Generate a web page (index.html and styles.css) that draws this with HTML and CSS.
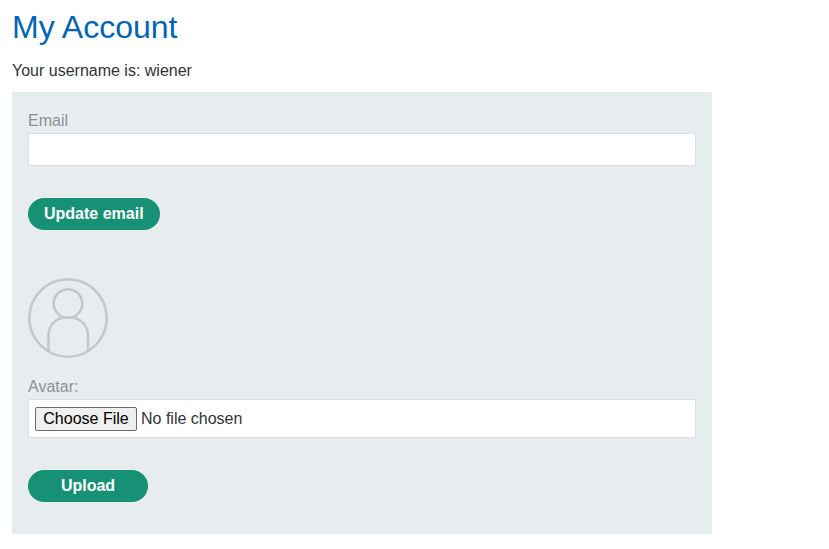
FILE: index.html
```html
<!DOCTYPE html>
<html lang="en">
<head>
<meta charset="utf-8">
<title>My Account</title>
<link rel="stylesheet" href="styles.css">
</head>
<body>
<main class="account">
  <h1 class="title">My Account</h1>
  <p class="username">Your username is: wiener</p>
  <div class="panel">
    <form class="form">
      <label class="label" for="email">Email</label>
      <input class="field" id="email" type="email" name="email">
      <button class="button" type="submit">Update email</button>
    </form>
    <form class="form">
      <svg class="avatar" viewBox="0 0 80 80" aria-hidden="true">
        <circle cx="40" cy="40" r="38.7"/>
        <circle cx="40" cy="25.5" r="14.3"/>
        <path d="M20.5 73V58C20.5 46 29 39.8 37 39.8H43C51 39.8 60 46 60 58V73"/>
      </svg>
      <label class="label" for="avatar">Avatar:</label>
      <input class="field file" id="avatar" type="file" name="avatar">
      <button class="button" type="submit">Upload</button>
    </form>
  </div>
</main>
</body>
</html>
```
FILE: styles.css
```css
* {
  box-sizing: border-box;
}

body {
  margin: 0;
  background: #fff;
  color: #333;
  font: 16px/20px "Liberation Sans", Arial, sans-serif;
}

.account {
  max-width: 724px;
  padding: 8px 12px;
}

.title {
  margin: 0;
  color: #0066b3;
  font-size: 32px;
  font-weight: 400;
  line-height: 38px;
}

.username {
  margin: 15px 0 11px;
}

.panel {
  display: flex;
  flex-direction: column;
  gap: 48px;
  padding: 19px 16px 32px;
  background: #e7edef;
}

.form {
  display: flex;
  flex-direction: column;
  align-items: flex-start;
}

.label {
  color: #8f8f8f;
}

.field {
  width: 100%;
  height: 33px;
  margin: 2px 0 32px;
  padding: 6px;
  border: 1px solid #dedede;
  border-radius: 0;
  background: #fff;
  color: #333;
  font: inherit;
}

.file {
  height: 39px;
  padding-top: 7px;
}

.file::file-selector-button {
  width: 102px;
  height: 24px;
  padding: 0;
  border: 1px solid #6b6b6b;
  border-radius: 2px;
  background: #efefef;
  color: #000;
  font: inherit;
}

.button {
  min-width: 120px;
  height: 32px;
  padding: 0 16px;
  border: 0;
  border-radius: 16px;
  background: #179175;
  color: #fff;
  font: inherit;
  font-weight: 700;
}

.avatar {
  width: 80px;
  height: 80px;
  margin-bottom: 19px;
  fill: none;
  stroke: #c3c8ca;
  stroke-width: 2.6;
}
```
